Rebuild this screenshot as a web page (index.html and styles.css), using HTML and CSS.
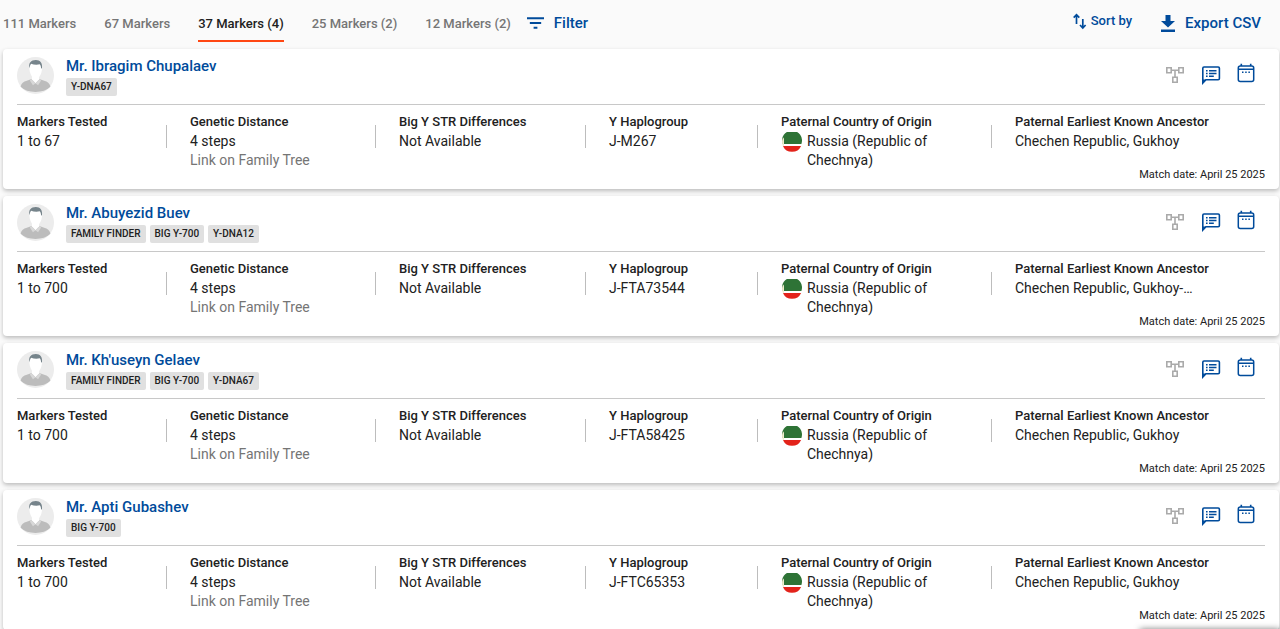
FILE: index.html
```html
<!DOCTYPE html>
<html lang="en">
<head>
  <meta charset="UTF-8">
  <title>Y-DNA Matches</title>
  <link rel="stylesheet" href="styles.css">
</head>
<body>

  <!-- Shared icons -->
  <svg class="sprite" aria-hidden="true">
    <symbol id="i-filter" viewBox="0 0 18 12">
      <path d="M0 0h18v2H0zM3 5h12v2H3zM7 10h4v2H7z"/>
    </symbol>
    <symbol id="i-sort" viewBox="0 0 14 18">
      <path d="M3.500 12V3M.7 5.700l2.800-3 2.800 3M9.800 7v9M7 13l2.800 3 2.800-3" fill="none" stroke="currentColor" stroke-width="1.7"/>
    </symbol>
    <symbol id="i-download" viewBox="0 0 14 17">
      <path d="M4.500 0h5v6H14l-7 6.500L0 6h4.500zM0 14.500h14V17H0z"/>
    </symbol>
    <symbol id="i-tree" viewBox="0 0 20 18">
      <path d="M1.800 1.800h4.400v5H1.800zM13.800 1.800h4.400v5h-4.400zM7.800 11.200h4.400v5H7.800zM6.200 4.300h7.600M10 4.300v6.900" fill="none" stroke="currentColor" stroke-width="1.6"/>
    </symbol>
    <symbol id="i-note" viewBox="0 0 20 20">
      <path d="M1.800 18V3.200Q1.800 2 3 2h14.200Q18.400 2 18.400 3.200v10.400q0 1.200-1.200 1.200H5z" fill="none" stroke="currentColor" stroke-width="1.6"/>
      <path d="M1 14.500h4.600L1 19.400zM5 4.900h1.600v1.500H5zM5 7.700h1.600v1.500H5zM5 10.500h1.600V12H5zM8 4.900h7.500v1.500H8zM8 7.700h7.500v1.500H8zM8 10.500h4.800V12H8z"/>
    </symbol>
    <symbol id="i-calendar" viewBox="0 0 18 20">
      <rect x="1.300" y="3" width="15.400" height="15.600" rx="2" fill="none" stroke="currentColor" stroke-width="1.500"/>
      <path d="M3.500.8h1.600V3H3.500zM12.900.8h1.600V3h-1.600zM1.300 5.500h15.400v1.400H1.300zM5 8.600h1.500v1.500H5zM8.200 8.600h1.500v1.500H8.200zM11.400 8.600h1.500v1.500h-1.500z"/>
    </symbol>
    <symbol id="i-avatar" viewBox="0 0 36 36">
      <circle cx="18" cy="18" r="18" fill="#ececec"/>
      <path d="M3.500 29c.5-3.500 3-5.200 6-5.900l5.500-2h6l5.500 2c3 .7 5.500 2.400 6 5.900-3.500 3.500-8.500 5-14.500 5s-11-1.500-14.500-5z" fill="#bcbcbc"/>
      <path d="M14.500 18h7v4L18 25.500 14.500 22z" fill="#fff"/>
      <path d="M14 21.500l4 4-2.500 2-3-4.700zM22 21.500l-4 4 2.500 2 3-4.700z" fill="#d8d8d8"/>
      <path d="M12 10c0-4 2.700-5.500 6.200-5.500S24.400 6 24.400 10.500c0 5.500-2.700 10.700-6.200 10.700S12 16 12 10z" fill="#fff"/>
      <path d="M12.100 11c-1.100-5 1.400-8 6.200-8 4.400 0 6.800 3 6 8.500l-.9-.8c-.1-1.600-.5-2.800-1.300-3.600-3 .7-6 .3-8.400-.5-.9 1.100-1.300 2.600-1.600 4.400z" fill="#76848b"/>
    </symbol>
    <symbol id="i-flag" viewBox="0 0 20 20">
      <circle cx="10" cy="10" r="10" fill="#fff"/>
      <path d="M.6 12A10 10 0 1 1 19.400 12z" fill="#2e7336"/>
      <path d="M.9 14A10 10 0 0 0 19.100 14z" fill="#e3231b"/>
      <path d="M1.200 5.500a10 10 0 0 0 0 9l.8-1v-7z" fill="#f1edcf"/>
    </symbol>
  </svg>

  <header class="toolbar">
    <nav class="tabs">
      <a href="#m111">111 Markers</a>
      <a href="#m67">67 Markers</a>
      <a href="#m37" class="active">37 Markers (4)</a>
      <a href="#m25">25 Markers (2)</a>
      <a href="#m12">12 Markers (2)</a>
    </nav>
    <button type="button" class="tool"><svg class="ic-filter"><use href="#i-filter"/></svg>Filter</button>
    <div class="tools-right">
      <button type="button" class="tool sort"><svg class="ic-sort"><use href="#i-sort"/></svg>Sort by</button>
      <button type="button" class="tool"><svg class="ic-download"><use href="#i-download"/></svg>Export CSV</button>
    </div>
  </header>

  <main class="matches">
    <article class="card">
      <div class="card-head">
        <svg class="avatar"><use href="#i-avatar"/></svg>
        <div class="person">
          <a href="#profile" class="name">Mr. Ibragim Chupalaev</a>
          <div class="tags"><span>Y-DNA67</span></div>
        </div>
        <div class="actions">
          <button type="button" class="off" aria-label="Family tree"><svg class="ic-tree"><use href="#i-tree"/></svg></button>
          <button type="button" aria-label="Notes"><svg class="ic-note"><use href="#i-note"/></svg></button>
          <button type="button" aria-label="Calendar"><svg class="ic-calendar"><use href="#i-calendar"/></svg></button>
        </div>
      </div>
      <dl class="details">
        <div><dt>Markers Tested</dt><dd>1 to 67</dd></div>
        <div><dt>Genetic Distance</dt><dd>4 steps</dd><dd class="link">Link on Family Tree</dd></div>
        <div><dt>Big Y STR Differences</dt><dd>Not Available</dd></div>
        <div><dt>Y Haplogroup</dt><dd>J-M267</dd></div>
        <div><dt>Paternal Country of Origin</dt><dd class="country"><svg class="flag"><use href="#i-flag"/></svg>Russia (Republic of Chechnya)</dd></div>
        <div><dt>Paternal Earliest Known Ancestor</dt><dd>Chechen Republic, Gukhoy</dd></div>
      </dl>
      <p class="date">Match date: April 25 2025</p>
    </article>

    <article class="card">
      <div class="card-head">
        <svg class="avatar"><use href="#i-avatar"/></svg>
        <div class="person">
          <a href="#profile" class="name">Mr. Abuyezid Buev</a>
          <div class="tags"><span>FAMILY FINDER</span><span>BIG Y-700</span><span>Y-DNA12</span></div>
        </div>
        <div class="actions">
          <button type="button" class="off" aria-label="Family tree"><svg class="ic-tree"><use href="#i-tree"/></svg></button>
          <button type="button" aria-label="Notes"><svg class="ic-note"><use href="#i-note"/></svg></button>
          <button type="button" aria-label="Calendar"><svg class="ic-calendar"><use href="#i-calendar"/></svg></button>
        </div>
      </div>
      <dl class="details">
        <div><dt>Markers Tested</dt><dd>1 to 700</dd></div>
        <div><dt>Genetic Distance</dt><dd>4 steps</dd><dd class="link">Link on Family Tree</dd></div>
        <div><dt>Big Y STR Differences</dt><dd>Not Available</dd></div>
        <div><dt>Y Haplogroup</dt><dd>J-FTA73544</dd></div>
        <div><dt>Paternal Country of Origin</dt><dd class="country"><svg class="flag"><use href="#i-flag"/></svg>Russia (Republic of Chechnya)</dd></div>
        <div><dt>Paternal Earliest Known Ancestor</dt><dd>Chechen Republic, Gukhoy-…</dd></div>
      </dl>
      <p class="date">Match date: April 25 2025</p>
    </article>

    <article class="card">
      <div class="card-head">
        <svg class="avatar"><use href="#i-avatar"/></svg>
        <div class="person">
          <a href="#profile" class="name">Mr. Kh'useyn Gelaev</a>
          <div class="tags"><span>FAMILY FINDER</span><span>BIG Y-700</span><span>Y-DNA67</span></div>
        </div>
        <div class="actions">
          <button type="button" class="off" aria-label="Family tree"><svg class="ic-tree"><use href="#i-tree"/></svg></button>
          <button type="button" aria-label="Notes"><svg class="ic-note"><use href="#i-note"/></svg></button>
          <button type="button" aria-label="Calendar"><svg class="ic-calendar"><use href="#i-calendar"/></svg></button>
        </div>
      </div>
      <dl class="details">
        <div><dt>Markers Tested</dt><dd>1 to 700</dd></div>
        <div><dt>Genetic Distance</dt><dd>4 steps</dd><dd class="link">Link on Family Tree</dd></div>
        <div><dt>Big Y STR Differences</dt><dd>Not Available</dd></div>
        <div><dt>Y Haplogroup</dt><dd>J-FTA58425</dd></div>
        <div><dt>Paternal Country of Origin</dt><dd class="country"><svg class="flag"><use href="#i-flag"/></svg>Russia (Republic of Chechnya)</dd></div>
        <div><dt>Paternal Earliest Known Ancestor</dt><dd>Chechen Republic, Gukhoy</dd></div>
      </dl>
      <p class="date">Match date: April 25 2025</p>
    </article>

    <article class="card">
      <div class="card-head">
        <svg class="avatar"><use href="#i-avatar"/></svg>
        <div class="person">
          <a href="#profile" class="name">Mr. Apti Gubashev</a>
          <div class="tags"><span>BIG Y-700</span></div>
        </div>
        <div class="actions">
          <button type="button" class="off" aria-label="Family tree"><svg class="ic-tree"><use href="#i-tree"/></svg></button>
          <button type="button" aria-label="Notes"><svg class="ic-note"><use href="#i-note"/></svg></button>
          <button type="button" aria-label="Calendar"><svg class="ic-calendar"><use href="#i-calendar"/></svg></button>
        </div>
      </div>
      <dl class="details">
        <div><dt>Markers Tested</dt><dd>1 to 700</dd></div>
        <div><dt>Genetic Distance</dt><dd>4 steps</dd><dd class="link">Link on Family Tree</dd></div>
        <div><dt>Big Y STR Differences</dt><dd>Not Available</dd></div>
        <div><dt>Y Haplogroup</dt><dd>J-FTC65353</dd></div>
        <div><dt>Paternal Country of Origin</dt><dd class="country"><svg class="flag"><use href="#i-flag"/></svg>Russia (Republic of Chechnya)</dd></div>
        <div><dt>Paternal Earliest Known Ancestor</dt><dd>Chechen Republic, Gukhoy</dd></div>
      </dl>
      <p class="date">Match date: April 25 2025</p>
    </article>
  </main>

  <div class="drawer"></div>

</body>
</html>
```

FILE: styles.css
```css
/* ─── Base ─── */
* { box-sizing: border-box; }
body {
  margin: 0;
  background: #fafafa;
  color: #212121;
  font-family: Roboto, "Liberation Sans", sans-serif;
  font-size: 14px;
}
svg { display: block; flex: none; fill: currentColor; }
button {
  padding: 0; border: none; background: none;
  color: #004b9b; font: inherit; cursor: pointer;
}
.sprite { position: absolute; width: 0; height: 0; }

/* ─── Toolbar ─── */
.toolbar {
  display: flex; align-items: center; gap: 16px;
  height: 49px; padding: 0 19px 3px 3px;
}
.tabs { display: flex; gap: 28px; }
.tabs a {
  padding: 11px 0 7px;
  border-bottom: 2px solid transparent;
  color: #757575; font-size: 13px; font-weight: 500; line-height: 18px;
  text-decoration: none;
}
.tabs a.active { color: #212121; border-color: #ff4713; }
.tool {
  display: flex; align-items: center; gap: 10px;
  font-size: 15px; font-weight: 500; line-height: 20px;
}
.tools-right { display: flex; gap: 29px; margin-left: auto; }
.sort { gap: 4px; padding-bottom: 4px; font-size: 13px; }
.ic-filter { width: 17px; height: 12px; }
.ic-sort { width: 14px; height: 18px; }
.ic-download { width: 14px; height: 17px; }

/* ─── Match cards ─── */
.matches { display: grid; gap: 7px; padding: 0 1px 0 3px; }
.card {
  padding: 8px 14px 9px;
  background: #fff; border-radius: 4px;
  box-shadow: 0 2px 4px rgba(0,0,0,0.25);
}
.card-head {
  display: flex; gap: 12px;
  height: 48px;
  border-bottom: 1px solid #c8c8c8;
}
.avatar { width: 37px; height: 37px; }
.name {
  display: block;
  color: #004b9b; font-size: 15px; font-weight: 500; line-height: 18px;
  text-decoration: none;
}
.tags { display: flex; gap: 4px; margin-top: 3px; }
.tags span {
  padding: 0 5px; border-radius: 2px; background: #e0e0e0;
  font-size: 10px; font-weight: 500; line-height: 18px;
}
.actions {
  display: flex; gap: 16px; align-items: flex-start;
  margin-left: auto; padding: 6px 10px 0 0;
}
.actions .off { color: #aaa; padding-top: 3px; }
.ic-tree { width: 20px; height: 18px; }
.ic-note { width: 20px; height: 20px; margin-top: 2px; }
.ic-calendar { width: 18px; height: 20px; }

/* ─── Details row ─── */
.details {
  display: grid;
  grid-template-columns: 173fr 209fr 210fr 172fr 234fr 250fr;
  margin: 0; padding-top: 8px;
}
.details > div { position: relative; padding-right: 32px; }
.details > div:last-child { padding-right: 0; }
.details > div:not(:last-child)::after {
  content: ""; position: absolute; top: 12px; right: 23px;
  width: 1px; height: 23px; background: #bdbdbd;
}
dt { padding-bottom: 1px; font-size: 13px; font-weight: 500; line-height: 18px; white-space: nowrap; }
dd { margin: 0; font-size: 14px; line-height: 19px; }
.link { color: #757575; }
.country { display: flex; gap: 5px; padding-left: 1px; }
.flag { width: 20px; height: 20px; }
.date {
  margin: 0;
  font-size: 11px; line-height: 10px; text-align: right;
}

/* Closed drawer, only its shadow shows at the bottom edge */
.drawer {
  position: fixed; right: 0; bottom: -20px;
  width: 140px; height: 20px;
  box-shadow: 0 0 6px rgba(0,0,0,0.5);
}
```
